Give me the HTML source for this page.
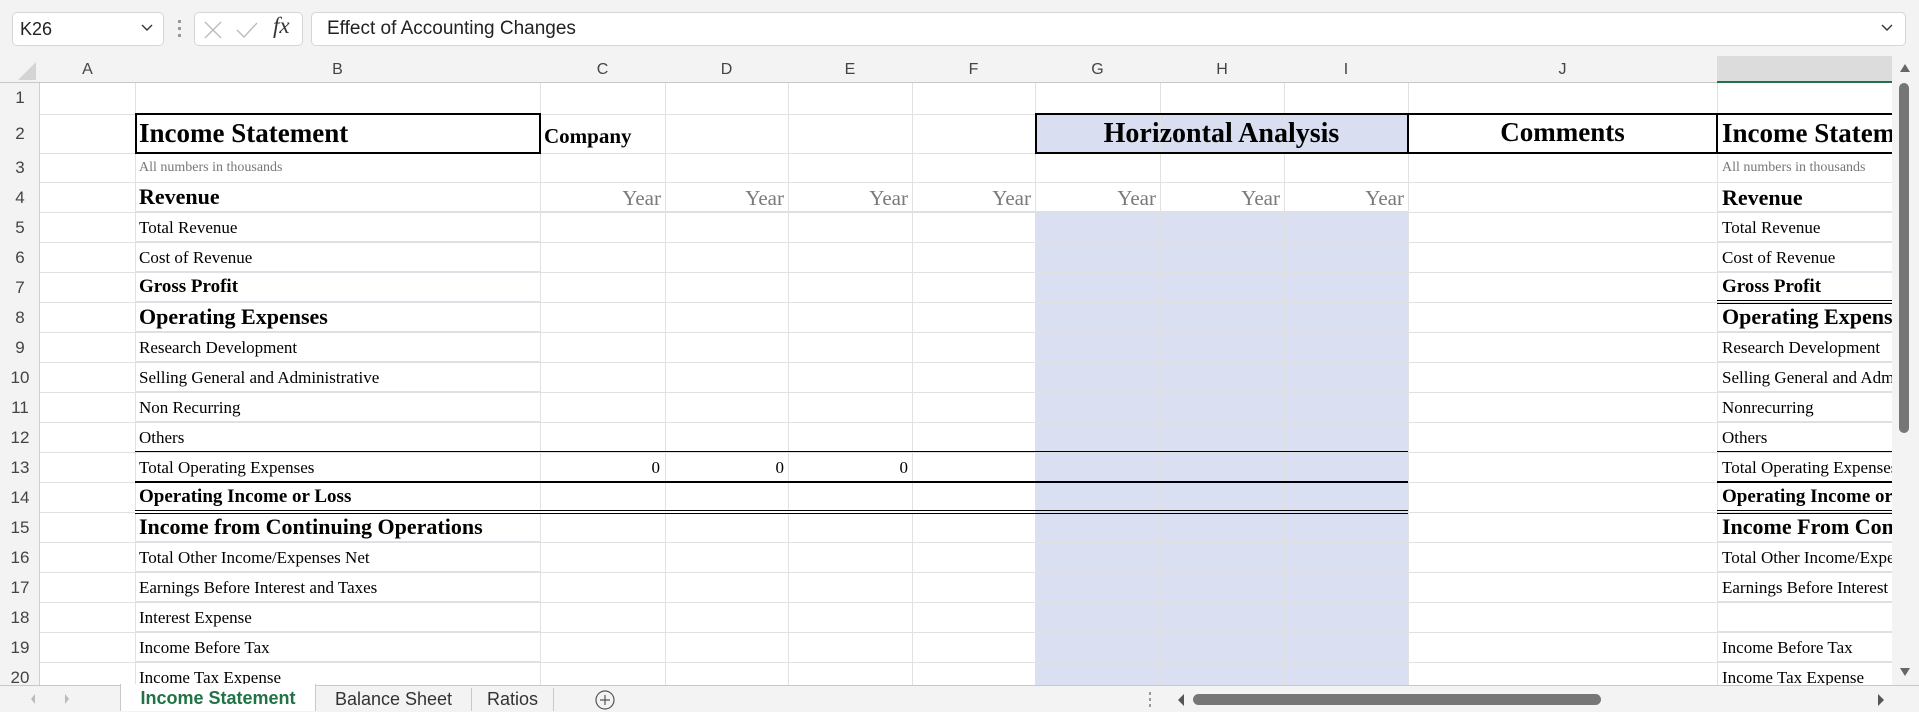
<!DOCTYPE html>
<html><head><meta charset="utf-8"><style>
*{margin:0;padding:0;box-sizing:border-box}
body{width:1919px;height:711px;background:#f3f3f3;position:relative;overflow:hidden;font-family:"Liberation Sans",sans-serif}
.a{position:absolute}
.sheet{position:absolute;left:0;top:0;width:1892px;height:685px;overflow:hidden}
.c{position:absolute;white-space:nowrap;font-family:"Liberation Serif",serif;font-size:17px;line-height:22px;color:#000}
.b{font-weight:bold;font-size:19px}
.big{font-size:22px;font-weight:bold;line-height:26px}
.y{font-size:21px;color:#7a7a7a;text-align:right;line-height:24px}
.vl{position:absolute;top:83px;width:1px;height:602px;background:#e1e1e1}
.ch{position:absolute;top:56px;height:27px;line-height:27px;text-align:center;font-size:16px;color:#444}
.rn{position:absolute;left:0;width:40px;text-align:center;font-size:17px;color:#444}
.k{position:absolute;left:1722px;width:170px;overflow:hidden;white-space:nowrap;font-family:"Liberation Serif",serif;font-size:17px;line-height:22px}
.gl{position:absolute;height:2px;background:#dde1e6}
</style></head><body>
<!-- toolbar -->
<div class="a" style="left:12px;top:12px;width:152px;height:34px;background:#fff;border:1px solid #d6d6d6;border-radius:5px;font-size:18px;line-height:32px;padding-left:7px;color:#222">K26</div>
<svg class="a" style="left:140px;top:22px" width="14" height="12"><path d="M2 3 L7 8 L12 3" fill="none" stroke="#333" stroke-width="1.4"/></svg>
<div class="a" style="left:178px;top:20px;width:3px;height:3px;background:#999"></div>
<div class="a" style="left:178px;top:27px;width:3px;height:3px;background:#999"></div>
<div class="a" style="left:178px;top:34px;width:3px;height:3px;background:#999"></div>
<div class="a" style="left:194px;top:12px;width:109px;height:34px;background:#fff;border:1px solid #d6d6d6;border-radius:5px"></div>
<svg class="a" style="left:202px;top:19px" width="22" height="22"><path d="M3 3 L19 19 M19 3 L3 19" stroke="#bbb" stroke-width="1.4"/></svg>
<svg class="a" style="left:235px;top:19px" width="24" height="22"><path d="M2 11 L9 18 L22 4" fill="none" stroke="#bbb" stroke-width="1.4"/></svg>
<div class="a" style="left:273px;top:13px;font-family:'Liberation Serif',serif;font-style:italic;font-size:23px;color:#333">fx</div>
<div class="a" style="left:311px;top:12px;width:1595px;height:34px;background:#fff;border:1px solid #d6d6d6;border-radius:5px;font-size:19px;line-height:32px;padding-left:15px;color:#222">Effect of Accounting Changes</div>
<svg class="a" style="left:1880px;top:22px" width="14" height="12"><path d="M2 3 L7 8 L12 3" fill="none" stroke="#333" stroke-width="1.4"/></svg>

<div class="sheet">
<div class="a" style="left:40px;top:83px;width:1852px;height:602px;background:#fff"></div>
<div class="a" style="left:1035px;top:114px;width:373px;height:39px;background:#d9dff0"></div>
<div class="a" style="left:1035px;top:212px;width:373px;height:480px;background:#dae0f1"></div>
<div class="a" style="left:40px;top:83px;width:1852px;height:609px;background:
linear-gradient(#e1e1e1,#e1e1e1) 0 31px/100% 1px no-repeat,
linear-gradient(#e1e1e1,#e1e1e1) 0 70px/100% 1px no-repeat,
linear-gradient(#e1e1e1,#e1e1e1) 0 99px/100% 1px no-repeat,
repeating-linear-gradient(to bottom,#e1e1e1 0,#e1e1e1 1px,transparent 1px,transparent 30px) 0 129px/100% 480px no-repeat"></div>
<div class="vl" style="left:135px"></div><div class="vl" style="left:540px"></div><div class="vl" style="left:665px"></div><div class="vl" style="left:788px"></div><div class="vl" style="left:912px"></div><div class="vl" style="left:1035px"></div><div class="vl" style="left:1160px"></div><div class="vl" style="left:1284px"></div><div class="vl" style="left:1408px"></div><div class="vl" style="left:1717px"></div>
<!-- light formatting lines -->
<div class="gl" style="left:135px;top:211px;width:1273px"></div>
<div class="gl" style="left:135px;top:241px;width:405px"></div><div class="gl" style="left:135px;top:271px;width:405px"></div><div class="gl" style="left:135px;top:301px;width:405px"></div><div class="gl" style="left:135px;top:331px;width:405px"></div><div class="gl" style="left:135px;top:361px;width:405px"></div><div class="gl" style="left:135px;top:391px;width:405px"></div><div class="gl" style="left:135px;top:421px;width:405px"></div>
<div class="gl" style="left:135px;top:541px;width:405px"></div><div class="gl" style="left:135px;top:571px;width:405px"></div><div class="gl" style="left:135px;top:601px;width:405px"></div><div class="gl" style="left:135px;top:631px;width:405px"></div><div class="gl" style="left:135px;top:661px;width:405px"></div>
<div class="gl" style="left:1717px;top:211px;width:175px"></div><div class="gl" style="left:1717px;top:241px;width:175px"></div><div class="gl" style="left:1717px;top:271px;width:175px"></div><div class="gl" style="left:1717px;top:331px;width:175px"></div><div class="gl" style="left:1717px;top:361px;width:175px"></div><div class="gl" style="left:1717px;top:391px;width:175px"></div><div class="gl" style="left:1717px;top:421px;width:175px"></div><div class="gl" style="left:1717px;top:541px;width:175px"></div><div class="gl" style="left:1717px;top:571px;width:175px"></div><div class="gl" style="left:1717px;top:601px;width:175px"></div><div class="gl" style="left:1717px;top:631px;width:175px"></div><div class="gl" style="left:1717px;top:661px;width:175px"></div>
<!-- boxes -->
<div class="a" style="left:135px;top:113px;width:406px;height:41px;border:2px solid #000"></div>
<div class="a" style="left:1035px;top:113px;width:374px;height:41px;border:2px solid #000"></div>
<div class="a" style="left:1407px;top:113px;width:311px;height:41px;border:2px solid #000"></div>
<div class="a" style="left:1716px;top:113px;width:180px;height:41px;border-top:2px solid #000;border-bottom:2px solid #000;border-left:2px solid #000"></div>
<div class="a" style="left:135px;top:451px;width:1273px;height:1px;background:#000"></div>
<div class="a" style="left:135px;top:481px;width:1273px;height:2px;background:#000"></div>
<div class="a" style="left:135px;top:510px;width:1273px;height:4px;border-top:1px solid #000;border-bottom:1px solid #000;background:#fff"></div>
<div class="a" style="left:1035px;top:511px;width:373px;height:2px;background:#dae0f1"></div>
<div class="a" style="left:1717px;top:300px;width:175px;height:4px;border-top:1px solid #000;border-bottom:1px solid #000"></div>
<div class="a" style="left:1717px;top:451px;width:175px;height:1px;background:#000"></div>
<div class="a" style="left:1717px;top:481px;width:175px;height:2px;background:#000"></div>
<div class="a" style="left:1717px;top:510px;width:175px;height:4px;border-top:1px solid #000;border-bottom:1px solid #000"></div>

<!-- texts B -->
<div class="c" style="left:139px;top:117px;font-size:27px;line-height:32px;font-weight:bold">Income Statement</div>
<div class="c" style="left:544px;top:123px;font-size:21px;line-height:26px;font-weight:bold">Company</div>
<div class="c" style="left:139px;top:159px;font-size:14px;line-height:18px;color:#777">All numbers in thousands</div>
<div class="c big" style="left:139px;top:184px">Revenue</div>
<div class="c" style="left:139px;top:217px">Total Revenue</div>
<div class="c" style="left:139px;top:247px">Cost of Revenue</div>
<div class="c b" style="left:139px;top:276px">Gross Profit</div>
<div class="c big" style="left:139px;top:304px">Operating Expenses</div>
<div class="c" style="left:139px;top:337px">Research Development</div>
<div class="c" style="left:139px;top:367px">Selling General and Administrative</div>
<div class="c" style="left:139px;top:397px">Non Recurring</div>
<div class="c" style="left:139px;top:427px">Others</div>
<div class="c" style="left:139px;top:457px">Total Operating Expenses</div>
<div class="c b" style="left:139px;top:486px">Operating Income or Loss</div>
<div class="c big" style="left:139px;top:514px">Income from Continuing Operations</div>
<div class="c" style="left:139px;top:547px">Total Other Income/Expenses Net</div>
<div class="c" style="left:139px;top:577px">Earnings Before Interest and Taxes</div>
<div class="c" style="left:139px;top:607px">Interest Expense</div>
<div class="c" style="left:139px;top:637px">Income Before Tax</div>
<div class="c" style="left:139px;top:667px">Income Tax Expense</div>
<div class="c y" style="left:540px;width:121px;top:186px">Year</div>
<div class="c y" style="left:665px;width:119px;top:186px">Year</div>
<div class="c y" style="left:788px;width:120px;top:186px">Year</div>
<div class="c y" style="left:912px;width:119px;top:186px">Year</div>
<div class="c y" style="left:1035px;width:121px;top:186px">Year</div>
<div class="c y" style="left:1160px;width:120px;top:186px">Year</div>
<div class="c y" style="left:1284px;width:120px;top:186px">Year</div>
<div class="c" style="left:540px;width:120px;top:457px;text-align:right">0</div>
<div class="c" style="left:665px;width:119px;top:457px;text-align:right">0</div>
<div class="c" style="left:788px;width:120px;top:457px;text-align:right">0</div>
<div class="c" style="left:1035px;width:373px;top:118px;font-size:28px;line-height:32px;font-weight:bold;text-align:center">Horizontal Analysis</div>
<div class="c" style="left:1408px;width:309px;top:116px;font-size:27px;line-height:32px;font-weight:bold;text-align:center">Comments</div>
<!-- K column -->
<div class="k" style="top:117px;font-size:27px;line-height:32px;font-weight:bold">Income Statement</div>
<div class="k" style="top:159px;font-size:14px;line-height:18px;color:#777">All numbers in thousands</div>
<div class="k" style="top:185px;font-size:22px;line-height:26px;font-weight:bold">Revenue</div>
<div class="k" style="top:217px">Total Revenue</div>
<div class="k" style="top:247px">Cost of Revenue</div>
<div class="k" style="top:276px;font-size:19px;font-weight:bold">Gross Profit</div>
<div class="k" style="top:304px;font-size:22px;line-height:26px;font-weight:bold">Operating Expenses</div>
<div class="k" style="top:337px">Research Development</div>
<div class="k" style="top:367px">Selling General and Administrative</div>
<div class="k" style="top:397px">Nonrecurring</div>
<div class="k" style="top:427px">Others</div>
<div class="k" style="top:457px">Total Operating Expenses</div>
<div class="k" style="top:486px;font-size:19px;font-weight:bold">Operating Income or Loss</div>
<div class="k" style="top:514px;font-size:22px;line-height:26px;font-weight:bold">Income From Continuing</div>
<div class="k" style="top:547px">Total Other Income/Expenses</div>
<div class="k" style="top:577px">Earnings Before Interest</div>
<div class="k" style="top:637px">Income Before Tax</div>
<div class="k" style="top:667px">Income Tax Expense</div>

<div class="a" style="left:0;top:56px;width:1892px;height:27px;background:#f3f3f3;border-bottom:1px solid #c8c8c8"></div>
<div class="a" style="left:1717px;top:56px;width:175px;height:27px;background:#dcdcdc;border-bottom:2px solid #217346"></div>
<svg class="a" style="left:4px;top:60px" width="34" height="22"><path d="M32 2 L32 20 L14 20 Z" fill="#d4d4d4"/></svg>
<div class="ch" style="left:40px;width:95px">A</div><div class="ch" style="left:135px;width:405px">B</div><div class="ch" style="left:540px;width:125px">C</div><div class="ch" style="left:665px;width:123px">D</div><div class="ch" style="left:788px;width:124px">E</div><div class="ch" style="left:912px;width:123px">F</div><div class="ch" style="left:1035px;width:125px">G</div><div class="ch" style="left:1160px;width:124px">H</div><div class="ch" style="left:1284px;width:124px">I</div><div class="ch" style="left:1408px;width:309px">J</div>
<div class="a" style="left:0;top:83px;width:40px;height:610px;background:#f3f3f3;border-right:1px solid #d0d0d0"></div>
<div class="rn" style="top:88px">1</div><div class="rn" style="top:124px">2</div><div class="rn" style="top:158px">3</div><div class="rn" style="top:188px">4</div><div class="rn" style="top:218px">5</div><div class="rn" style="top:248px">6</div><div class="rn" style="top:278px">7</div><div class="rn" style="top:308px">8</div><div class="rn" style="top:338px">9</div><div class="rn" style="top:368px">10</div><div class="rn" style="top:398px">11</div><div class="rn" style="top:428px">12</div><div class="rn" style="top:458px">13</div><div class="rn" style="top:488px">14</div><div class="rn" style="top:518px">15</div><div class="rn" style="top:548px">16</div><div class="rn" style="top:578px">17</div><div class="rn" style="top:608px">18</div><div class="rn" style="top:638px">19</div><div class="rn" style="top:668px">20</div>
</div>

<div class="a" style="left:1892px;top:56px;width:27px;height:629px;background:#f3f3f3"></div>
<svg class="a" style="left:1899px;top:63px" width="12" height="10"><path d="M6 1 L11 9 L1 9 Z" fill="#666"/></svg>
<div class="a" style="left:1899px;top:83px;width:10px;height:350px;background:#767676;border-radius:5px"></div>
<svg class="a" style="left:1899px;top:667px" width="12" height="10"><path d="M1 1 L11 1 L6 9 Z" fill="#666"/></svg>
<div class="a" style="left:0;top:685px;width:1919px;height:26px;background:#f3f3f3;border-top:1px solid #c8c8c8"></div>
<svg class="a" style="left:28px;top:692px" width="10" height="14"><path d="M7 2 L3 7 L7 12" fill="#bbb"/></svg>
<svg class="a" style="left:62px;top:692px" width="10" height="14"><path d="M3 2 L7 7 L3 12" fill="#bbb"/></svg>
<div class="a" style="left:120px;top:684px;width:196px;height:27px;background:#fff;border-left:1px solid #c8c8c8;border-right:1px solid #c8c8c8;color:#217346;font-weight:bold;font-size:18px;line-height:28px;text-align:center">Income Statement</div>
<div class="a" style="left:316px;top:688px;width:156px;height:23px;border-right:1px solid #c8c8c8;color:#333;font-size:18px;line-height:23px;text-align:center">Balance Sheet</div>
<div class="a" style="left:472px;top:688px;width:82px;height:23px;border-right:1px solid #c8c8c8;color:#333;font-size:18px;line-height:23px;text-align:center">Ratios</div>
<svg class="a" style="left:594px;top:689px" width="22" height="22"><circle cx="11" cy="11" r="9" fill="none" stroke="#555" stroke-width="1.2"/><path d="M11 6 V16 M6 11 H16" stroke="#555" stroke-width="1.2"/></svg>
<div class="a" style="left:1149px;top:692px;width:2px;height:3px;background:#999"></div><div class="a" style="left:1149px;top:698px;width:2px;height:3px;background:#999"></div><div class="a" style="left:1149px;top:704px;width:2px;height:3px;background:#999"></div>
<svg class="a" style="left:1176px;top:693px" width="10" height="14"><path d="M8 1 L2 7 L8 13 Z" fill="#555"/></svg>
<div class="a" style="left:1193px;top:694px;width:408px;height:11px;background:#767676;border-radius:6px"></div>
<svg class="a" style="left:1876px;top:693px" width="10" height="14"><path d="M2 1 L8 7 L2 13 Z" fill="#555"/></svg>
</body></html>
